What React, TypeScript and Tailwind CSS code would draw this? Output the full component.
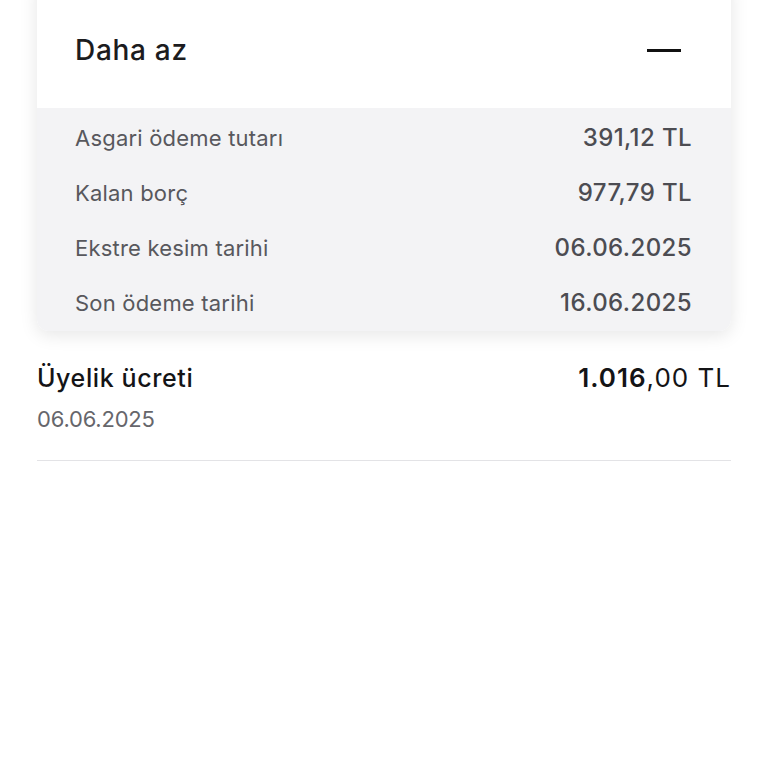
import React from 'react';

const rows = [
  { label: "Asgari ödeme tutarı", value: "391,12 TL" },
  { label: "Kalan borç", value: "977,79 TL" },
  { label: "Ekstre kesim tarihi", value: "06.06.2025" },
  { label: "Son ödeme tarihi", value: "16.06.2025" },
];

const App = () => {
  return (
    <div className="min-h-[768px] w-[768px] bg-white font-['Inter',sans-serif]">
      <div className="px-[37px]">
        {/* Card */}
        <div className="-mt-[20px] rounded-b-[12px] bg-white shadow-[0_4px_18px_rgba(0,0,0,0.10)] overflow-hidden">
          <div className="flex h-[128px] items-center justify-between pt-[12px] pl-[38px] pr-[50px]">
            <span className="text-[28px] font-medium leading-none tracking-[0.7px] text-[#1c1c1e]">Daha az</span>
            <span className="block h-[3px] w-[34px] bg-[#111]" />
          </div>
          <div className="bg-[#f3f3f5] pl-[38px] pr-[39px] pt-[2px] pb-[1px]">
            {rows.map((r) => (
              <div key={r.label} className="flex h-[55px] items-center justify-between">
                <span className="text-[22px] leading-none tracking-[0.2px] text-[#58585d]">{r.label}</span>
                <span className="text-[24px] font-medium leading-none tracking-[0.4px] text-[#4c4c52]">{r.value}</span>
              </div>
            ))}
          </div>
        </div>

        {/* Transaction */}
        <div className="border-b border-[#e3e3e6] pt-[32px] pb-[28px]">
          <div className="flex h-[30px] items-center justify-between">
            <span className="text-[25px] font-medium leading-none tracking-[0.6px] text-[#141416]">Üyelik ücreti</span>
            <span className="text-[26px] leading-none tracking-[1px] text-[#141416]">
              <span className="font-semibold">1.016</span>
              <span className="font-normal">,00 TL</span>
            </span>
          </div>
          <div className="mt-[13px] h-[26px] text-[22px] leading-[26px] tracking-[-0.2px] text-[#66666b]">06.06.2025</div>
        </div>
      </div>
    </div>
  );
};

export default App;
